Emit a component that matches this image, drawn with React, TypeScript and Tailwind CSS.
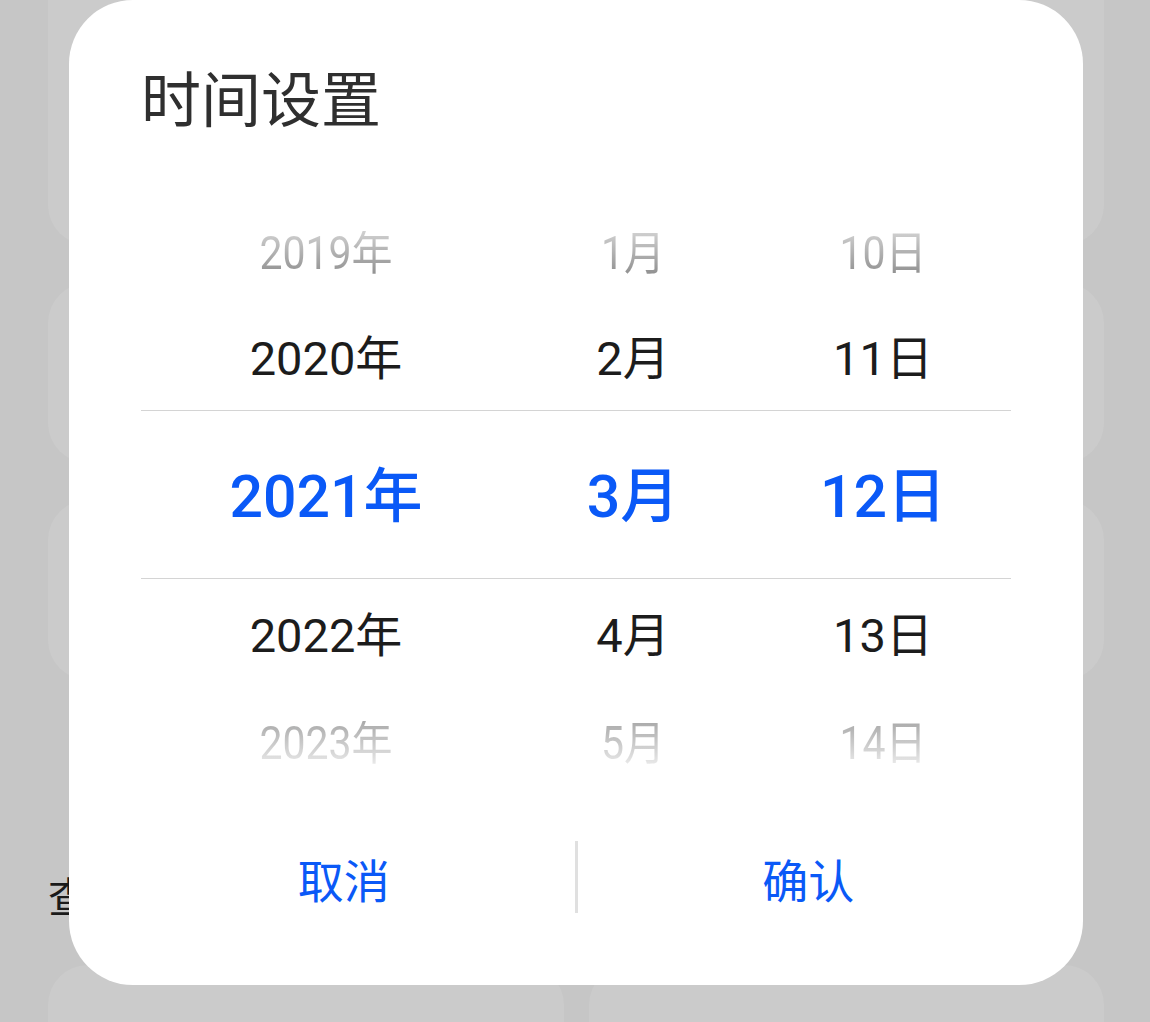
import React from 'react';

type Row = { year: string; month: string; day: string };

const rows: { cells: Row; kind: 'fadeTop' | 'normal' | 'selected' | 'fadeBottom'; h: string }[] = [
  { cells: { year: '2019年', month: '1月', day: '10日' }, kind: 'fadeTop', h: 'h-[106px]' },
  { cells: { year: '2020年', month: '2月', day: '11日' }, kind: 'normal', h: 'h-[104px]' },
  { cells: { year: '2021年', month: '3月', day: '12日' }, kind: 'selected', h: 'h-[169px]' },
  { cells: { year: '2022年', month: '4月', day: '13日' }, kind: 'normal', h: 'h-[112px]' },
  { cells: { year: '2023年', month: '5月', day: '14日' }, kind: 'fadeBottom', h: 'h-[104px]' },
];

const textClass = {
  fadeTop:
    'text-[41px] leading-none scale-y-[1.12] bg-gradient-to-b from-[#d2d2d2] to-[#8e8e8e] bg-clip-text text-transparent',
  normal: 'text-[47px] leading-none text-[#1c1c1c]',
  selected: 'text-[59px] leading-none font-medium text-[#0a59f7] translate-y-[2px]',
  fadeBottom:
    'text-[41px] leading-none scale-y-[1.12] bg-gradient-to-b from-[#a9a9a9] to-[#ececec] bg-clip-text text-transparent',
};

const Cell: React.FC<{ text: string; kind: keyof typeof textClass; width: string }> = ({ text, kind, width }) => (
  <div className={`${width} flex items-center justify-center`}>
    <span className={`inline-block ${textClass[kind]}`}>{text}</span>
  </div>
);

export default function App() {
  return (
    <div className="relative w-[1150px] h-[1022px] overflow-hidden bg-[#c6c6c6] font-['Roboto','Noto_Sans_CJK_SC',sans-serif]">
      {/* page behind the dimmed overlay */}
      <div className="flex flex-col pl-[48px] pr-[46px]">
        <div className="h-[245px] rounded-b-[40px] bg-[#cbcbcb]" />
        <div className="mt-[38px] h-[180px] rounded-[40px] bg-[#cbcbcb]" />
        <div className="mt-[37px] h-[180px] rounded-[40px] bg-[#cbcbcb]" />
        <div className="mt-[199px] h-[40px] flex items-center text-[42px] leading-none text-[#1a1a1a]">
          查看更多
        </div>
        <div className="mt-[46px] flex gap-[25px]">
          <div className="flex-1 h-[120px] rounded-[40px] bg-[#cbcbcb]" />
          <div className="flex-1 h-[120px] rounded-[40px] bg-[#cbcbcb]" />
        </div>
      </div>

      {/* dialog */}
      <div className="absolute left-[69px] top-0 w-[1014px] h-[985px] rounded-[64px] bg-white flex flex-col">
        <div className="pt-[72px] pl-[72px]">
          <h1 className="text-[60px] leading-[60px] font-normal text-[#2f2f2f]">时间设置</h1>
        </div>

        <div className="mt-[68px] mx-[72px] flex flex-col">
          {rows.map((r) => (
            <div
              key={r.cells.year}
              className={`${r.h} flex ${r.kind === 'selected' ? 'border-y border-[#d4d4d4]' : ''}`}
            >
              <Cell text={r.cells.year} kind={r.kind} width="w-[370px]" />
              <Cell text={r.cells.month} kind={r.kind} width="w-[244px]" />
              <Cell text={r.cells.day} kind={r.kind} width="w-[256px]" />
            </div>
          ))}
        </div>

        <div className="mt-[46px] mx-[44px] h-[72px] flex items-center">
          <button className="flex-1 h-full flex items-center justify-center pt-[10px] text-[46px] leading-none text-[#0a59f7]">
            取消
          </button>
          <div className="w-[3px] h-[72px] bg-[#e0e0e0]" />
          <button className="flex-1 h-full flex items-center justify-center pt-[10px] text-[46px] leading-none text-[#0a59f7]">
            确认
          </button>
        </div>
      </div>
    </div>
  );
}
